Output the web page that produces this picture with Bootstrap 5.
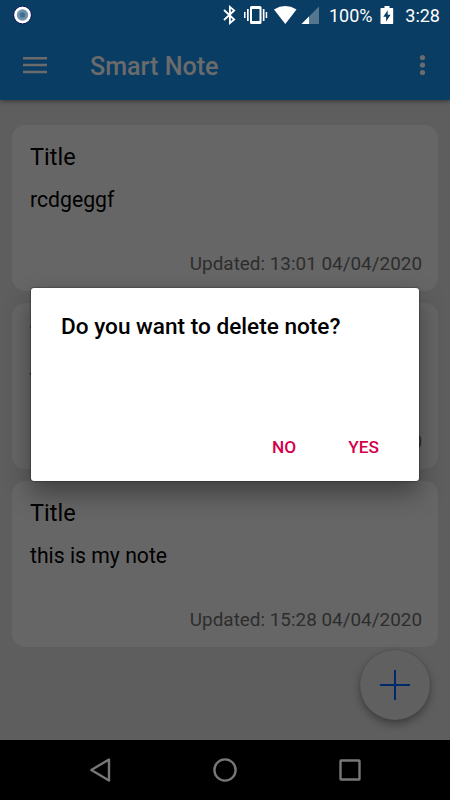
<!DOCTYPE html>
<html lang="en">
<head>
<meta charset="utf-8">
<meta name="viewport" content="width=device-width, initial-scale=1">
<title>Smart Note</title>
<link href="https://cdn.jsdelivr.net/npm/bootstrap@5.3.0/dist/css/bootstrap.min.css" rel="stylesheet">
<style>
body{font-family:Roboto,"Liberation Sans",sans-serif;background:#5e5e5e;width:450px;height:800px;overflow:hidden;color:#000}
svg{display:block;flex:none}
.top-area{background:#0a3d64;height:100px;box-shadow:0 1px 5px rgba(0,0,0,.45);z-index:1}
.status{height:31px;color:#fff;font-size:18px;line-height:31px}
.clock{margin-right:10px}
.battery{margin-left:6px}
.app-name{font-size:25.1px;font-weight:500;color:#6b6b6b;line-height:30px;padding-top:2px}
.toolbar{height:69px}
.notes{padding:25px 12px 0;gap:12px}
.note{height:166px;border-radius:13px;background:#666;padding:17px 16px 0 18px}
.note h2{font-size:23.5px;line-height:30px;font-weight:400;margin:0}
.note p{font-size:21.2px;line-height:26px;margin:15px 0 0}
.note time{font-size:18.9px;line-height:24px;color:#2d2d2d;margin-bottom:15px}
.dialog{left:31px;top:288px;width:388px;height:193px;border-radius:3px;background:#fff;box-shadow:0 0 2px rgba(0,0,0,.7),0 12px 26px rgba(0,0,0,.38);padding:24px 31px 20px 30px;z-index:3}
.dialog h1{font-size:22.6px;line-height:30px;font-weight:500;margin:0}
.dialog .btn{font-family:inherit;font-size:17.3px;line-height:24px;font-weight:500;color:#d5004b;padding:2px 9px;border:0}
.dialog .actions{gap:34px}
.fab{left:360px;top:650px;width:70px;height:70px;background:#606060;box-shadow:0 4px 8px rgba(0,0,0,.35),0 0 2px rgba(0,0,0,.15);border:0;z-index:2}
.navigation{height:60px;background:#000}
</style>
<script src="https://cdn.jsdelivr.net/npm/bootstrap@5.3.0/dist/js/bootstrap.bundle.min.js"></script>
</head>
<body class="d-flex flex-column position-relative">
<header class="top-area position-relative flex-shrink-0">
  <div class="status d-flex align-items-center">
    <svg width="220" height="31" viewBox="0 0 220 31"><circle cx="22.5" cy="15" r="8.9" fill="#fff" stroke="#07105e" stroke-width="1"/><circle cx="22.5" cy="15" r="5.7" fill="#6f92ac"/><circle cx="22.5" cy="15" r="2.7" fill="#416f91"/></svg>
    <svg width="109" height="31" viewBox="220 0 109 31" fill="#fff">
      <path d="M224 10l10.200 9.500-4.300 3.600V6.900l4.300 3.600L224 20" fill="none" stroke="#fff" stroke-width="1.800"/>
      <path fill-rule="evenodd" d="M251.500 6h8.500a1.500 1.500 0 0 1 1.500 1.500v15a1.500 1.500 0 0 1-1.500 1.500h-8.500a1.500 1.500 0 0 1-1.500-1.500v-15a1.500 1.500 0 0 1 1.500-1.500zM252 9v12h7.500V9z"/>
      <path d="M247 9h1.700v12H247zM244 12h1.500v6H244zM262.800 9h1.700v12h-1.700zM265.700 12h1.500v6h-1.500z"/>
      <path d="M274 9.400Q285.300 2.500 296.500 9.400L285.300 24z"/>
      <path d="M319 6.500V24H301.500z" fill="#54768f"/><path d="M309 16.500V24h-7.500z"/>
    </svg>
    <span>100%</span>
    <svg class="battery" width="16" height="31" viewBox="379 0 16 31"><path d="M384.500 6h5v2h3a.7.700 0 0 1 .7.700v14.600a.7.700 0 0 1-.7.700h-11.300a.7.700 0 0 1-.7-.7V8.700a.7.700 0 0 1 .7-.7h3.300z" fill="#fff"/><path d="M387.700 10.300l-4.400 6.500h2.800v4.700l4.500-6.700h-2.900z" fill="#0a3d64"/></svg>
    <span class="clock ms-auto">3:28</span>
  </div>
  <div class="toolbar d-flex align-items-center">
    <svg width="90" height="69" viewBox="0 31 90 69"><path d="M23 58.200h24M23 65.100h24M23 72h24" stroke="#6b6b6b" stroke-width="2.500"/></svg>
    <span class="app-name">Smart Note</span>
    <svg class="ms-auto" width="40" height="69" viewBox="410 31 40 69" fill="#6b6b6b"><circle cx="422.500" cy="57.500" r="2.600"/><circle cx="422.500" cy="65" r="2.600"/><circle cx="422.500" cy="72.500" r="2.600"/></svg>
  </div>
</header>
<main class="notes d-flex flex-column flex-grow-1">
  <article class="note d-flex flex-column"><h2>Title</h2><p>rcdgeggf</p><time class="mt-auto align-self-end">Updated: 13:01 04/04/2020</time></article>
  <article class="note d-flex flex-column"><h2>Title</h2><p>test</p><time class="mt-auto align-self-end">Updated: 13:00 04/04/2020</time></article>
  <article class="note d-flex flex-column"><h2>Title</h2><p>this is my note</p><time class="mt-auto align-self-end">Updated: 15:28 04/04/2020</time></article>
</main>
<button class="fab position-absolute rounded-circle p-0 d-flex align-items-center justify-content-center" aria-label="Add note"><svg width="30" height="30" viewBox="0 0 30 30"><path d="M15 0v30M0 15h30" stroke="#00296c" stroke-width="2"/></svg></button>
<section class="dialog position-absolute d-flex flex-column" role="dialog">
  <h1>Do you want to delete note?</h1>
  <div class="actions d-flex justify-content-end mt-auto"><button class="btn">NO</button><button class="btn">YES</button></div>
</section>
<nav class="navigation d-flex flex-shrink-0 align-items-center justify-content-center">
  <svg width="450" height="60" viewBox="0 740 450 60" fill="none" stroke="#777" stroke-width="2.400" stroke-linejoin="round"><path d="M109 759.500v21l-17.700-10.500z"/><circle cx="225" cy="770" r="10.600"/><rect x="340.500" y="760.500" width="19" height="19" rx=".5"/></svg>
</nav>
</body>
</html>
